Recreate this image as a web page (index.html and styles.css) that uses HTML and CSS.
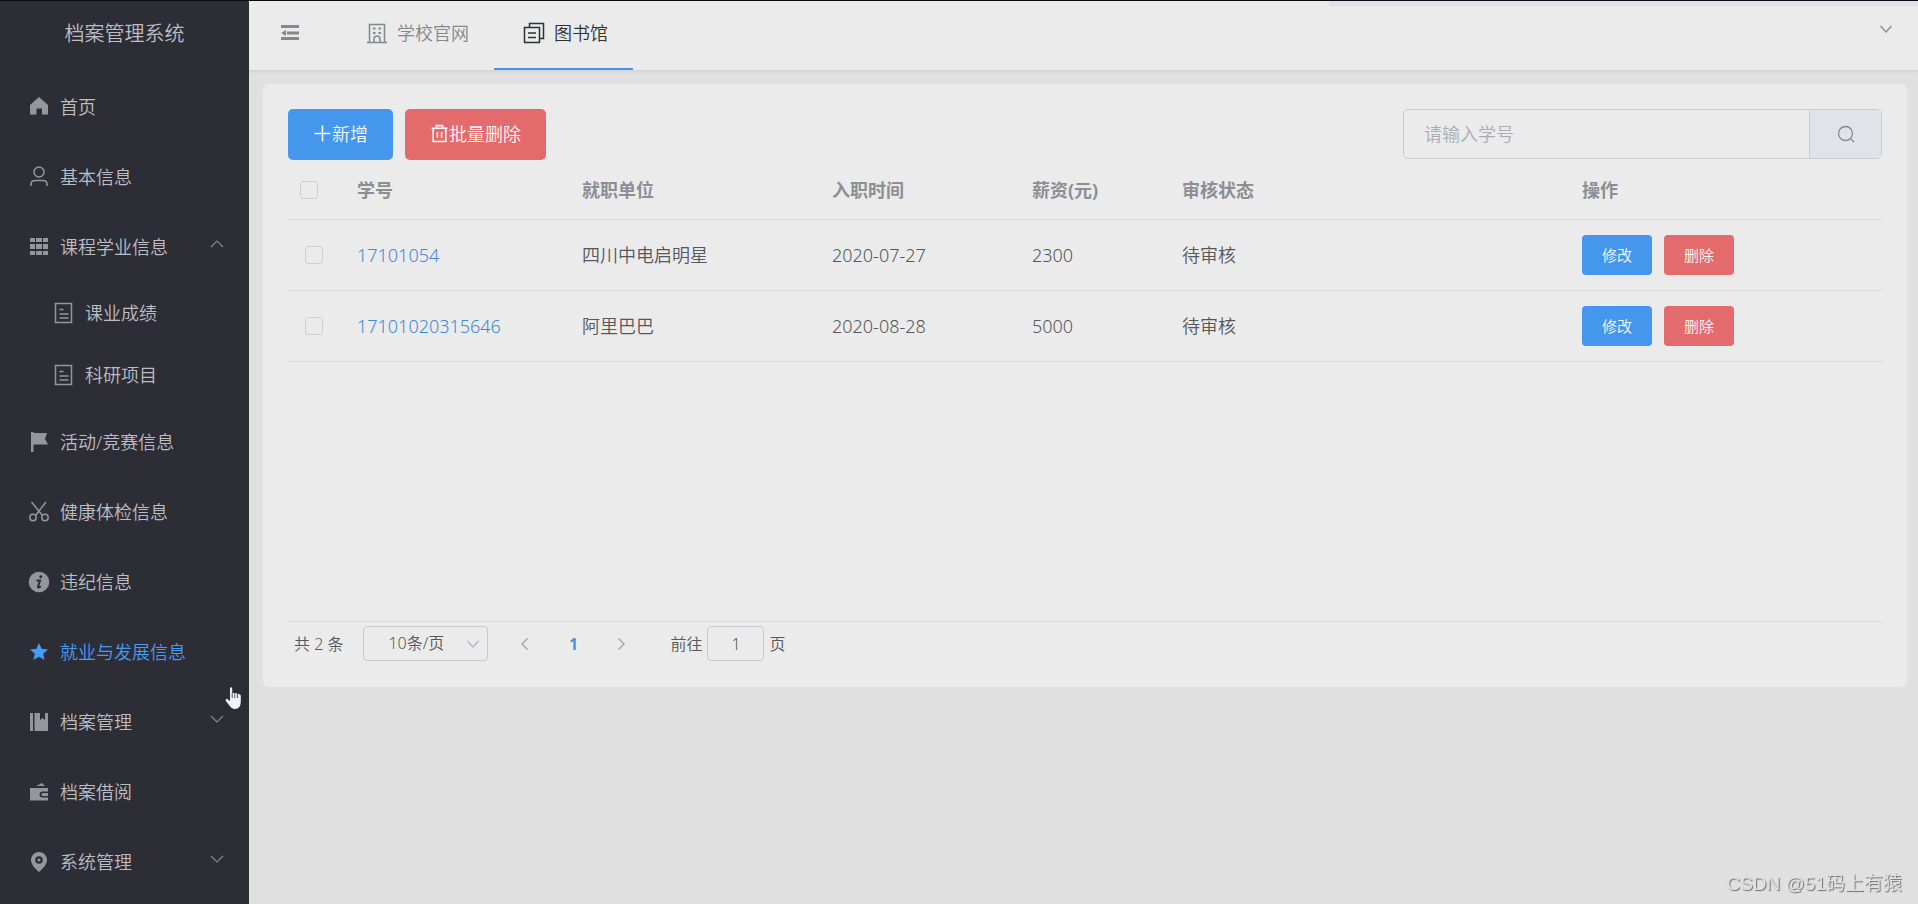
FILE: index.html
```html
<!DOCTYPE html>
<html lang="zh-CN">
<head>
<meta charset="utf-8">
<title>档案管理系统</title>
<link rel="stylesheet" href="styles.css">
</head>
<body>
<div class="app">
  <aside class="sidebar">
    <h1 class="brand">档案管理系统</h1>
    <nav>
      <ul class="menu">
        <li><a class="item" href="#"><svg class="icon" viewBox="0 0 22 22"><path fill="currentColor" d="M11 1 20 9V18.500H14V12.500H8.500V18.500H2V9Z"/></svg>首页</a></li>
        <li><a class="item" href="#"><svg class="icon line" viewBox="0 0 22 22"><circle cx="11" cy="6" r="5"/><path d="M3 20V18Q3 14.500 7 14.500H15Q19 14.500 19 18V20"/></svg>基本信息</a></li>
        <li>
          <button class="item" type="button" aria-expanded="true"><svg class="icon" viewBox="0 0 22 22"><path fill="currentColor" d="M2 2h5v4H2zM8 2h6v4H8zM15 2h5v4h-5zM2 8h5v5H2zM8 8h6v5H8zM15 8h5v5h-5zM2 15h5v4H2zM8 15h6v4H8zM15 15h5v4h-5z"/></svg>课程学业信息<svg class="arrow line" viewBox="0 0 14 14"><path d="M1 7 7 1l6 6"/></svg></button>
          <ul class="submenu">
            <li><a class="item" href="#"><svg class="icon line" viewBox="0 0 22 22"><path d="M2.500 1.500h16v19h-16zM6.500 7.500h4M6.500 12h9M6.500 16h9"/></svg>课业成绩</a></li>
            <li><a class="item" href="#"><svg class="icon line" viewBox="0 0 22 22"><path d="M2.500 1.500h16v19h-16zM6.500 7.500h4M6.500 12h9M6.500 16h9"/></svg>科研项目</a></li>
          </ul>
        </li>
        <li><a class="item" href="#"><svg class="icon" viewBox="0 0 22 22"><path fill="currentColor" d="M3 1h2.500v1H19l-2 6 3 5.500H5.500V21H3z"/></svg>活动/竞赛信息</a></li>
        <li><a class="item" href="#"><svg class="icon line" viewBox="0 0 22 22"><path d="M3.500 1 14.500 14.500M18 1 7.500 14.500"/><circle cx="5" cy="16.500" r="3.200"/><circle cx="17" cy="16.500" r="3.200"/></svg>健康体检信息</a></li>
        <li><a class="item" href="#"><svg class="icon" viewBox="0 0 22 22"><circle cx="11" cy="11" r="10.300" fill="currentColor"/><circle cx="12.800" cy="5.800" r="1.500" fill="#2d2d36"/><path d="M8.500 9.500H12L10 16q0 1.300 2.800-.6" fill="none" stroke="#2d2d36" stroke-width="2"/></svg>违纪信息</a></li>
        <li><a class="item active" href="#"><svg class="icon" viewBox="0 0 22 22"><path fill="currentColor" d="m11 2 2.600 5.800 6.400.7-4.800 4.200 1.400 6.300L11 15.800 5.400 19l1.400-6.300L2 8.500l6.400-.7z"/></svg>就业与发展信息</a></li>
        <li><button class="item" type="button" aria-expanded="false"><svg class="icon" viewBox="0 0 22 22"><path fill="currentColor" d="M2 2h3v18H2zM6.500 2H12v7l2.500-2L17 9V2h3v18H6.500z"/></svg>档案管理<svg class="arrow line" viewBox="0 0 14 14"><path d="m1 1 6 6 6-6"/></svg></button></li>
        <li><a class="item" href="#"><svg class="icon" viewBox="0 0 22 22"><path fill="currentColor" d="M8 5 14 2l3 3zM2 7h18v3.500h-5.500a2.700 2.700 0 0 0 0 6H20V19.500H2z"/><path fill="currentColor" d="M15 12h5v3h-5a1.500 1.500 0 0 1 0-3z"/></svg>档案借阅</a></li>
        <li><button class="item" type="button" aria-expanded="false"><svg class="icon" viewBox="0 0 22 22"><path fill="currentColor" fill-rule="evenodd" d="M11 1a8 8 0 0 1 8 8c0 4.500-4 8.500-8 12C7 17.500 3 13.500 3 9a8 8 0 0 1 8-8zm0 4.200a3.800 3.800 0 1 0 0 7.600 3.800 3.800 0 0 0 0-7.600z"/><circle cx="11" cy="9" r="1.500" fill="currentColor"/></svg>系统管理<svg class="arrow line" viewBox="0 0 14 14"><path d="m1 1 6 6 6-6"/></svg></button></li>
      </ul>
    </nav>
    <svg class="pointer" viewBox="0 0 17 23"><path fill="#f1f1f6" d="M5 1.500Q5 .3 6 .3T7.200 1.500V6.500Q8 5 9.500 6.500 11 5.500 12.200 7 14 6 15.800 8.500V15Q15.500 22 10 22 6.500 22 4 18L.8 14Q0 12 2 11.800L5 14Z"/><path stroke="#2d2d36" stroke-width=".8" fill="none" d="M7.200 6v5M9.800 6.500V11M12.500 7v4"/></svg>
  </aside>

  <div class="page">
    <header class="topbar">
      <button class="collapse" type="button" aria-label="折叠菜单"><svg viewBox="0 0 20 16"><path fill="currentColor" d="M1 0h18v3H1zM7 6.500h12v3H7zM1 12h18v3H1zM1 8l5-3v6z"/></svg></button>
      <nav class="tabs">
        <a class="tab" href="#"><svg class="icon line" viewBox="0 0 22 22"><path d="M1 20.500h20M3.500 20V2.500h15V20M8 20v-3a3 3 0 0 1 6 0v3"/><path stroke-width="2" d="M7 6.500h2.500M12.500 6.500H15M7 11h2.500M12.500 11H15"/></svg>学校官网</a>
        <a class="tab current" href="#"><svg class="icon line" viewBox="0 0 22 22"><path d="M1.500 5.500h15v15h-15zM6.500 5V1.500h14v15H17M5 11h8M5 15.500h8"/></svg>图书馆</a>
      </nav>
      <button class="account" type="button" aria-label="用户菜单"><svg class="line" viewBox="0 0 14 14"><path d="m1.500 4 5.500 6 5.500-6"/></svg></button>
      <div class="progress"></div>
    </header>

    <main class="content">
      <section class="card">
        <div class="toolbar">
          <button class="btn primary" type="button"><svg class="btn-icon line" viewBox="0 0 18 18"><path d="M9 1.500v15M1.500 9h15"/></svg>新增</button>
          <button class="btn danger" type="button"><svg class="btn-icon line" viewBox="0 0 18 18"><path d="M1.500 4h15M6 4V1.500h6V4M3 4v12.500h12V4M7 7.500v5.500M11 7.500v5.500"/></svg>批量删除</button>
          <form class="search">
            <input type="text" placeholder="请输入学号" aria-label="学号">
            <button type="button" aria-label="搜索"><svg class="line" viewBox="0 0 18 18"><circle cx="8.500" cy="8.500" r="7"/><path d="m13.500 13.500 3.500 3.500"/></svg></button>
          </form>
        </div>

        <div class="table-wrap">
          <table>
            <colgroup><col class="c-check"><col class="c-id"><col class="c-org"><col class="c-date"><col class="c-pay"><col class="c-state"><col></colgroup>
            <thead>
              <tr><th><input type="checkbox" aria-label="全选"></th><th>学号</th><th>就职单位</th><th>入职时间</th><th>薪资(元)</th><th>审核状态</th><th>操作</th></tr>
            </thead>
            <tbody>
              <tr><td class="pick"><input type="checkbox" aria-label="选择 17101054"></td><td><a href="#">17101054</a></td><td>四川中电启明星</td><td>2020-07-27</td><td>2300</td><td>待审核</td><td><div class="actions"><button class="btn small primary" type="button">修改</button><button class="btn small danger" type="button">删除</button></div></td></tr>
              <tr><td class="pick"><input type="checkbox" aria-label="选择 17101020315646"></td><td><a href="#">17101020315646</a></td><td>阿里巴巴</td><td>2020-08-28</td><td>5000</td><td>待审核</td><td><div class="actions"><button class="btn small primary" type="button">修改</button><button class="btn small danger" type="button">删除</button></div></td></tr>
            </tbody>
          </table>
        </div>

        <div class="pager">
          <span class="total">共 2 条</span>
          <div class="size">
            <select aria-label="每页条数"><option>10条/页</option></select>
            <svg class="line" viewBox="0 0 14 14"><path d="m1.500 4 5.500 6 5.500-6"/></svg>
          </div>
          <div class="pages">
            <button type="button" aria-label="上一页"><svg class="line" viewBox="0 0 14 14"><path d="M9.500 1.500 4 7l5.500 5.500"/></svg></button>
            <button class="number" type="button">1</button>
            <button type="button" aria-label="下一页"><svg class="line" viewBox="0 0 14 14"><path d="M4.500 1.500 10 7l-5.500 5.500"/></svg></button>
          </div>
          <label class="jump">前往<input type="text" value="1">页</label>
        </div>
      </section>
    </main>
  </div>
</div>
<div class="watermark">CSDN @51码上有猿</div>
</body>
</html>
```
FILE: styles.css
```css
* { box-sizing: border-box; }

body {
  margin: 0;
  background: #e0e0e0;
  color: #55575b;
  font-family: "Noto Sans", "Noto Sans CJK SC", sans-serif;
  font-size: 18px;
  font-weight: 350;
  line-height: 24px;
}

button, input, select { font: inherit; color: inherit; margin: 0; }
button { border: 0; padding: 0; background: none; cursor: pointer; }
a { color: inherit; text-decoration: none; }
ul { list-style: none; margin: 0; padding: 0; }
svg { display: block; flex: none; }

.line { fill: none; stroke: currentColor; stroke-width: 1.500; }

.app {
  display: flex;
  min-height: 100vh;
  border-top: 1px solid #0b0b14;
}

/* Sidebar */
.sidebar {
  position: relative;
  flex: none;
  width: 249px;
  background: #2d2d36;
  color: #bdbec3;
}

.brand {
  margin: 0;
  padding-top: 21px;
  height: 71px;
  font-size: 20px;
  font-weight: 350;
  text-align: center;
}

.item {
  display: flex;
  align-items: center;
  width: 100%;
  height: 70px;
  padding: 0 25px;
  text-align: left;
}

.item .icon {
  width: 22px;
  height: 22px;
  margin: 0 10px 0 3px;
  color: #94969b;
}

.item.active, .item.active .icon { color: #459bf5; }

.arrow {
  width: 14px;
  height: 14px;
  margin-left: auto;
  color: #85868c;
  stroke-width: 1.200;
}

.submenu { padding-bottom: 1px; }
.submenu .item { height: 62px; padding-left: 50px; }

.pointer {
  position: absolute;
  left: 225px;
  top: 686px;
  width: 17px;
  height: 23px;
}

/* Top bar */
.page { flex: 1; min-width: 0; }

.topbar {
  position: relative;
  display: flex;
  height: 70px;
  background: #ebebeb;
  border-bottom: 1px solid #d4d5d7;
  box-shadow: 0 1px 4px rgba(0, 0, 0, 0.05);
  color: #85888d;
}

.collapse { width: 20px; margin: 0 37px 6px 31px; }
.tabs { display: flex; }

.tab {
  display: flex;
  align-items: center;
  padding: 0 25px 6px;
}

.tab .icon { width: 22px; height: 22px; margin: 0 9px 0 4px; }

.tab.current {
  padding-bottom: 4px;
  border-bottom: 2px solid #4a94e0;
  color: #2f3135;
}

.account { width: 14px; margin: 0 25px 14px auto; }
.account svg { stroke-width: 1.200; }

.progress {
  position: absolute;
  top: 0;
  right: 0;
  width: 589px;
  height: 5px;
  background: #dfe1e8;
}

/* Card */
.content { padding: 13px 11px 13px 14px; }

.card {
  padding: 25px;
  background: #ebebeb;
  border-radius: 6px;
}

.toolbar { display: flex; gap: 12px; align-items: flex-start; }

.btn {
  display: flex;
  align-items: center;
  justify-content: center;
  height: 51px;
  padding: 0 25px 2px;
  border-radius: 5px;
  color: #f5f7fa;
}

.primary { background: #4597ed; }
.danger { background: #e46b6b; }
.btn-icon { width: 19px; height: 19px; }

.search {
  display: flex;
  width: 479px;
  height: 50px;
  margin-left: auto;
  border: 1px solid #c9ccd3;
  border-radius: 5px;
  overflow: hidden;
}

.search input {
  flex: 1;
  min-width: 0;
  padding: 0 20px 1px;
  border: 0;
  background: none;
}

.search input::placeholder { color: #aaadb5; opacity: 1; }

.search button {
  width: 72px;
  background: #e1e3e8;
  border-left: 1px solid #c9ccd3;
  color: #85888d;
}

.search svg { width: 18px; height: 18px; margin: 0 auto; stroke-width: 1.300; }

/* Table */
.table-wrap { min-height: 462px; border-bottom: 1px solid #dadbdd; }

table {
  width: 100%;
  table-layout: fixed;
  border-collapse: separate;
  border-spacing: 0;
}

.c-check { width: 56px; }
.c-id { width: 225px; }
.c-org { width: 250px; }
.c-date { width: 200px; }
.c-pay { width: 150px; }
.c-state { width: 400px; }

th, td {
  height: 71px;
  padding: 0 13px;
  border-bottom: 1px solid #dadbdd;
  text-align: left;
}

th { height: 60px; color: #8b8e94; font-weight: 700; }
td a { color: #4189dc; }
th:first-child { padding-left: 12px; }
.pick { padding-left: 17px; }

input[type="checkbox"] {
  display: block;
  appearance: none;
  width: 18px;
  height: 18px;
  border: 1px solid #cfd0d4;
  border-radius: 3px;
}

.actions { display: flex; gap: 12px; }
.btn.small { width: 70px; height: 40px; padding: 0 0 1px; border-radius: 4px; font-size: 15px; }

/* Pagination */
.pager {
  display: flex;
  align-items: center;
  padding: 4px 6px 1px;
  font-size: 16px;
}

.size { display: flex; align-items: center; margin-left: 20px; }

.size select {
  appearance: none;
  width: 125px;
  height: 35px;
  padding: 0 30px 1px 24px;
  border: 1px solid #c9cacd;
  border-radius: 4px;
  background: none;
}

.size svg { width: 14px; height: 14px; margin-left: -22px; margin-right: 8px; color: #b3b6bd; stroke-width: 1.300; }

.pages { display: flex; margin-left: 13px; color: #a6a8ac; }
.pages button { width: 48px; height: 35px; }
.pages svg { width: 14px; height: 14px; margin: 0 auto; }
.pages .number { color: #5091dc; font-weight: 700; }

.jump { display: flex; align-items: center; gap: 5px; margin-left: 25px; }

.jump input {
  width: 57px;
  height: 35px;
  padding: 0;
  border: 1px solid #c9cacd;
  border-radius: 4px;
  background: none;
  text-align: center;
}

.watermark {
  position: fixed;
  right: 16px;
  bottom: 8px;
  color: #e0e0e0;
  font-family: "Liberation Sans", "Noto Sans CJK SC", sans-serif;
  font-size: 19px;
  text-shadow: 1px 1px 1px #6c6c6c;
}
```
